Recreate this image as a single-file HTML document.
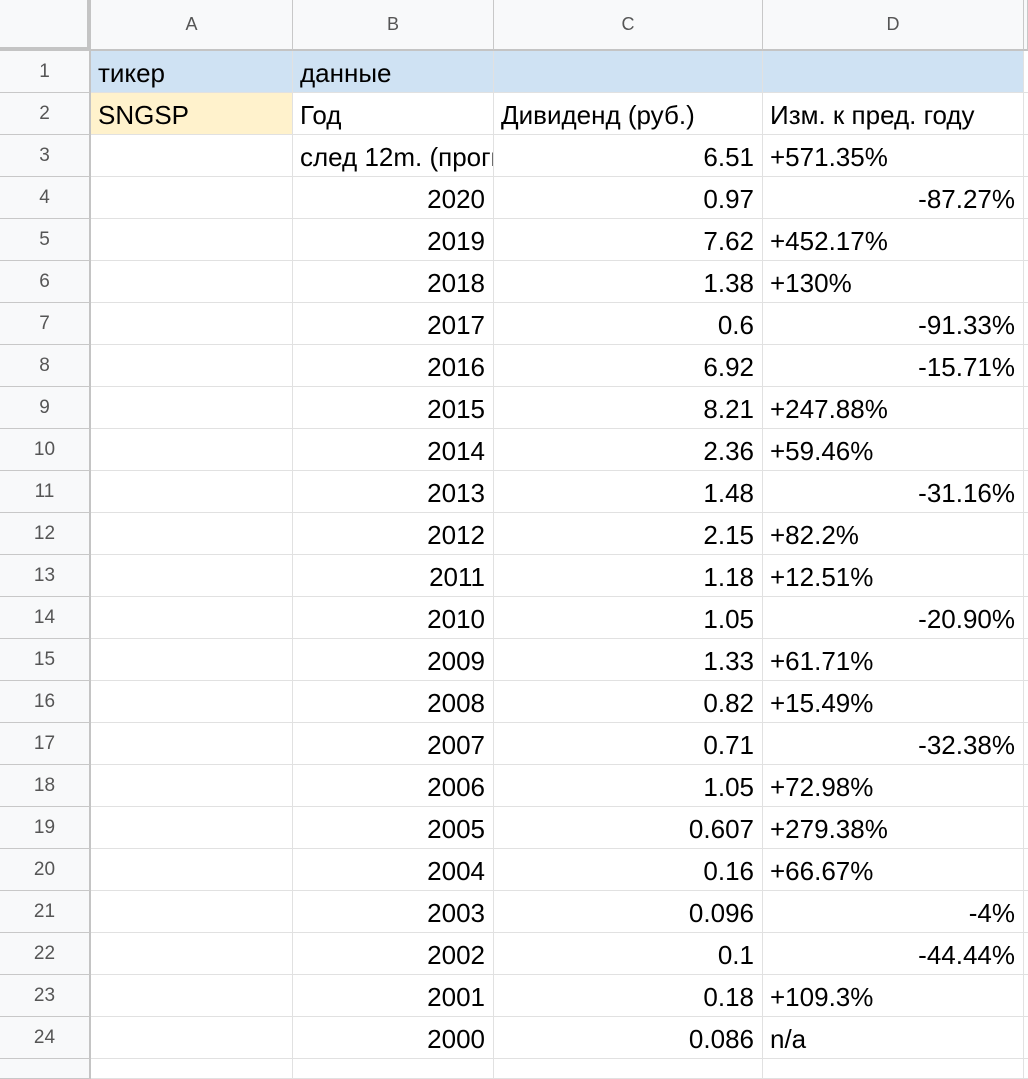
<!DOCTYPE html>
<html><head><meta charset="utf-8">
<style>
*{box-sizing:border-box;margin:0;padding:0}
body{width:1028px;height:1064px;overflow:hidden;background:#fff;font-family:"Liberation Sans",Arial,sans-serif}
.g{display:grid;grid-template-columns:91px 202px 201px 269px 261px 4px;grid-template-rows:51px repeat(24,42px) 20px}
.g>div{border-right:1px solid #e1e1e1;border-bottom:1px solid #e1e1e1;font-size:26px;color:#000;padding:4px 7px 0 7px;display:flex;align-items:center;white-space:nowrap;overflow:hidden}
.g>div.h{background:#f8f9fa;color:#555;font-size:18px;justify-content:center;border-color:#c8c8c8;border-bottom:2px solid #c4c4c4;padding:0}
.g>div.r{background:#f8f9fa;color:#555;font-size:19px;justify-content:center;border-bottom:1px solid #c8c8c8;border-right:2px solid #c4c4c4;padding:0}
.g>div.c0{background:#f8f9fa;border-right:4px solid #c4c4c4;border-bottom:4px solid #c4c4c4}
.g>div.rt{justify-content:flex-end;padding-right:8px}
.bl{background:#cfe2f3}
.yl{background:#fff2cc}
</style></head><body>
<div class="g">
<div class="c0"></div><div class="h">A</div><div class="h">B</div><div class="h">C</div><div class="h">D</div><div class="h"></div>
<div class="r">1</div><div class="bl">тикер</div><div class="bl">данные</div><div class="bl"></div><div class="bl"></div><div></div>
<div class="r">2</div><div class="yl">SNGSP</div><div>Год</div><div>Дивиденд (руб.)</div><div>Изм. к пред. году</div><div></div>
<div class="r">3</div><div></div><div>след 12m. (прогноз)</div><div class="rt">6.51</div><div>+571.35%</div><div></div>
<div class="r">4</div><div></div><div class="rt">2020</div><div class="rt">0.97</div><div class="rt">-87.27%</div><div></div>
<div class="r">5</div><div></div><div class="rt">2019</div><div class="rt">7.62</div><div>+452.17%</div><div></div>
<div class="r">6</div><div></div><div class="rt">2018</div><div class="rt">1.38</div><div>+130%</div><div></div>
<div class="r">7</div><div></div><div class="rt">2017</div><div class="rt">0.6</div><div class="rt">-91.33%</div><div></div>
<div class="r">8</div><div></div><div class="rt">2016</div><div class="rt">6.92</div><div class="rt">-15.71%</div><div></div>
<div class="r">9</div><div></div><div class="rt">2015</div><div class="rt">8.21</div><div>+247.88%</div><div></div>
<div class="r">10</div><div></div><div class="rt">2014</div><div class="rt">2.36</div><div>+59.46%</div><div></div>
<div class="r">11</div><div></div><div class="rt">2013</div><div class="rt">1.48</div><div class="rt">-31.16%</div><div></div>
<div class="r">12</div><div></div><div class="rt">2012</div><div class="rt">2.15</div><div>+82.2%</div><div></div>
<div class="r">13</div><div></div><div class="rt">2011</div><div class="rt">1.18</div><div>+12.51%</div><div></div>
<div class="r">14</div><div></div><div class="rt">2010</div><div class="rt">1.05</div><div class="rt">-20.90%</div><div></div>
<div class="r">15</div><div></div><div class="rt">2009</div><div class="rt">1.33</div><div>+61.71%</div><div></div>
<div class="r">16</div><div></div><div class="rt">2008</div><div class="rt">0.82</div><div>+15.49%</div><div></div>
<div class="r">17</div><div></div><div class="rt">2007</div><div class="rt">0.71</div><div class="rt">-32.38%</div><div></div>
<div class="r">18</div><div></div><div class="rt">2006</div><div class="rt">1.05</div><div>+72.98%</div><div></div>
<div class="r">19</div><div></div><div class="rt">2005</div><div class="rt">0.607</div><div>+279.38%</div><div></div>
<div class="r">20</div><div></div><div class="rt">2004</div><div class="rt">0.16</div><div>+66.67%</div><div></div>
<div class="r">21</div><div></div><div class="rt">2003</div><div class="rt">0.096</div><div class="rt">-4%</div><div></div>
<div class="r">22</div><div></div><div class="rt">2002</div><div class="rt">0.1</div><div class="rt">-44.44%</div><div></div>
<div class="r">23</div><div></div><div class="rt">2001</div><div class="rt">0.18</div><div>+109.3%</div><div></div>
<div class="r">24</div><div></div><div class="rt">2000</div><div class="rt">0.086</div><div>n/a</div><div></div>
<div class="r"></div><div></div><div></div><div></div><div></div><div></div>
</div>
</body></html>
